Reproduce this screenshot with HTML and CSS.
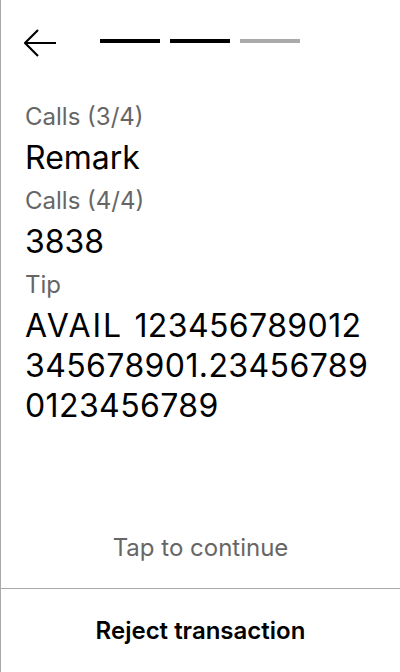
FILE: index.html
```html
<!DOCTYPE html>
<html>
<head>
<meta charset="utf-8">
<link rel="stylesheet" href="styles.css">
</head>
<body>
<div class="screen">
  <header class="top">
    <svg class="back" width="34" height="30" viewBox="0 0 34 30" aria-label="Back">
      <path d="M14 2 L1 15 L14 28 M1 15 H32" fill="none" stroke="#000" stroke-width="2.2"/>
    </svg>
    <div class="steps">
      <span class="step done"></span>
      <span class="step done"></span>
      <span class="step"></span>
    </div>
  </header>
  <main class="content">
    <div class="label">Calls (3/4)</div>
    <div class="value">Remark</div>
    <div class="label">Calls (4/4)</div>
    <div class="value">3838</div>
    <div class="label">Tip</div>
    <div class="value big"><span class="unit">AVAIL</span> 123456789012345678901.234567890123456789</div>
  </main>
  <div class="hint">Tap to continue</div>
  <footer class="footer">Reject transaction</footer>
</div>
</body>
</html>
```
FILE: styles.css
```css
* { box-sizing: border-box; }
html, body { margin: 0; padding: 0; background: #fff; }
body { font-family: Inter, "Noto Sans", sans-serif; color: #000; }
.screen {
  width: 400px;
  height: 672px;
  border-left: 1px solid #aaa;
  display: flex;
  flex-direction: column;
}
.top {
  display: flex;
  align-items: center;
  padding: 28px 0 0 23px;
  height: 58px;
}
.back { display: block; }
.steps {
  display: flex;
  gap: 10px;
  margin-left: 42px;
  margin-top: -4px;
}
.step { width: 60px; height: 4px; background: #aaa; }
.step.done { background: #000; }
.content {
  padding: 43px 24px 0 24px;
  flex: 1;
}
.label {
  font-size: 24px;
  line-height: 32px;
  color: #666;
}
.value {
  font-size: 32px;
  line-height: 40px;
  margin: 5px 0 7px;
}
.value.big {
  word-break: break-all;
  letter-spacing: 0.4px;
  word-spacing: 2px;
}
.unit { letter-spacing: 1.9px; }
.hint {
  text-align: center;
  font-size: 24px;
  line-height: 29px;
  color: #666;
  padding-bottom: 26px;
}
.footer {
  border-top: 1px solid #aaa;
  height: 84px;
  display: flex;
  align-items: center;
  justify-content: center;
  font-size: 24px;
  font-weight: 600;
}
```
